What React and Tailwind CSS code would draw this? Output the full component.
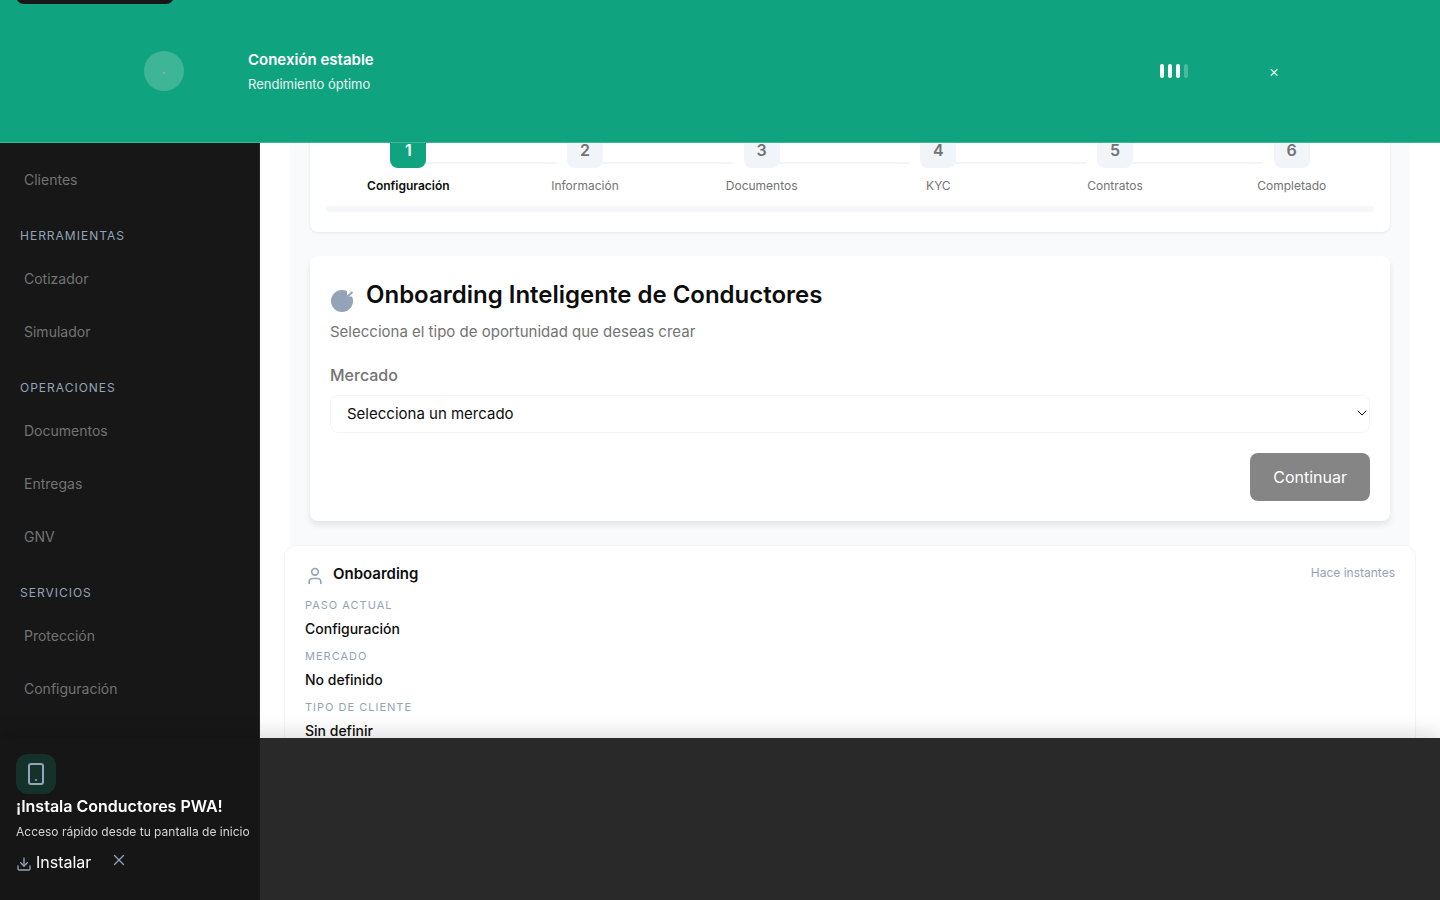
import { Download, Smartphone, User, X, ChevronDown } from "lucide-react";

const groups = [
  { title: "Herramientas", items: ["Cotizador", "Simulador"] },
  { title: "Operaciones", items: ["Documentos", "Entregas", "GNV"] },
  { title: "Servicios", items: ["Protección", "Configuración"] },
];

const steps = ["Configuración", "Información", "Documentos", "KYC", "Contratos", "Completado"];

const summary = [
  ["Paso actual", "Configuración"],
  ["Mercado", "No definido"],
  ["Tipo de cliente", "Sin definir"],
];

function NavItem({ label }) {
  return (
    <a href="#" className="block px-6 py-4 text-sm leading-[21px] text-[#737373]">
      {label}
    </a>
  );
}

function Sidebar() {
  return (
    <aside className="w-[260px] shrink-0 border-r border-[#262626] bg-[#171717] pt-[153px]">
      <nav aria-label="Principal">
        <NavItem label="Clientes" />
        {groups.map((group) => (
          <section key={group.title} className="pt-5">
            <h3 className="px-5 pb-1.5 text-xs leading-5 tracking-[1px] text-[#94a3b8] uppercase">
              {group.title}
            </h3>
            {group.items.map((item) => (
              <NavItem key={item} label={item} />
            ))}
          </section>
        ))}
      </nav>
    </aside>
  );
}

function StatusBanner() {
  return (
    <header className="fixed inset-x-0 top-0 z-20 flex h-[143px] items-center border-b border-white/20 bg-[#10a37f] px-36 text-white">
      <div className="flex size-10 shrink-0 items-center justify-center rounded-full bg-white/20">
        <span className="mt-1 size-0.5 bg-[#94a3b8]" />
      </div>
      <div className="ml-16 flex-1">
        <p className="text-[15px] leading-6 font-semibold">Conexión estable</p>
        <p className="mt-0.5 text-[13px] leading-5 text-white/90">Rendimiento óptimo</p>
      </div>
      <div className="flex gap-1">
        <span className="h-3.5 w-1 rounded-xs bg-white" />
        <span className="h-3.5 w-1 rounded-xs bg-white" />
        <span className="h-3.5 w-1 rounded-xs bg-white" />
        <span className="h-3.5 w-1 rounded-xs bg-white/25" />
      </div>
      <button type="button" aria-label="Cerrar aviso" className="mr-3 ml-[76px] flex size-5 items-center justify-center text-base leading-5 font-light text-white">
        ×
      </button>
    </header>
  );
}

function Stepper() {
  return (
    <section className="rounded-lg bg-white px-2.5 pb-5 shadow-[0_1px_3px_rgba(0,0,0,0.08)]">
      <ol className="flex">
        {steps.map((step, index) => (
          <li key={step} className="relative flex flex-1 flex-col items-center">
            {index < steps.length - 1 && (
              <span className="absolute top-[30px] right-[-60px] left-1/2 h-0.5 bg-[#f1f5f9]" />
            )}
            <span
              className={
                index === 0
                  ? "relative flex size-9 items-center justify-center rounded-lg bg-[#10a37f] font-semibold text-white"
                  : "relative flex size-9 items-center justify-center rounded-lg bg-[#f1f5f9] font-semibold text-[#737373]"
              }
            >
              {index + 1}
            </span>
            <span
              className={
                index === 0
                  ? "mt-2 text-xs leading-5 font-semibold text-[#0d0d0d]"
                  : "mt-2 text-xs leading-5 text-[#737373]"
              }
            >
              {step}
            </span>
          </li>
        ))}
      </ol>
      <div className="mx-1.5 mt-2.5 h-1.5 rounded-full bg-[#f5f7fb]" />
    </section>
  );
}

function TargetIcon() {
  return (
    <svg viewBox="0 0 24 24" className="mt-[13px] size-6 shrink-0" aria-hidden="true">
      <circle cx="12" cy="12" r="11" fill="#94a3b8" />
      <path d="M17 1v5.500l1 1h6V0h-5z" fill="#fff" />
      <path d="m17.500 7.500 5-4.500" stroke="#94a3b8" strokeWidth="2" />
    </svg>
  );
}

function OnboardingForm() {
  return (
    <section className="mt-6 rounded-lg bg-white p-5 shadow-[0_4px_6px_rgba(0,0,0,0.09)]">
      <div className="flex gap-3">
        <TargetIcon />
        <h1 className="text-2xl leading-[38px] font-semibold text-[#0d0d0d]">
          Onboarding Inteligente de Conductores
        </h1>
      </div>
      <p className="mt-1.5 text-[15px] leading-6 text-[#737373]">
        Selecciona el tipo de oportunidad que deseas crear
      </p>
      <label htmlFor="market" className="mt-[19px] block text-base leading-6 font-medium text-[#737373]">
        Mercado
      </label>
      <div className="relative mt-2">
        <select
          id="market"
          className="block h-[38px] w-full appearance-none rounded-lg border border-[#f1f5f9] bg-white px-4 text-[15px] text-[#0d0d0d]"
        >
          <option>Selecciona un mercado</option>
        </select>
        <ChevronDown size={16} strokeWidth={1.5} className="pointer-events-none absolute top-2.5 right-0 text-black" />
      </div>
      <div className="mt-5 flex justify-end">
        <button type="button" disabled className="h-12 rounded-lg bg-[#858585] px-[23px] text-base text-white">
          Continuar
        </button>
      </div>
    </section>
  );
}

function ContextCard() {
  return (
    <section className="mx-6 flex-1 rounded-t-xl border border-b-0 border-[#f1f5f9] bg-white px-5 pt-4 pb-6">
      <div className="flex h-6 items-start justify-between">
        <div className="flex gap-2">
          <User size={20} strokeWidth={2} className="mt-1 text-[#94a3b8]" />
          <h2 className="text-[15px] leading-6 font-semibold text-[#0d0d0d]">Onboarding</h2>
        </div>
        <span className="text-xs leading-[22px] text-[#94a3b8]">Hace instantes</span>
      </div>
      <dl className="mt-2.5 flex flex-col gap-2">
        {summary.map(([term, value]) => (
          <div key={term}>
            <dt className="text-[11px] leading-[18px] tracking-[1px] text-[#94a3b8] uppercase">{term}</dt>
            <dd className="mt-1 text-sm leading-[21px] font-medium text-[#0d0d0d]">{value}</dd>
          </div>
        ))}
      </dl>
    </section>
  );
}

function InstallBar() {
  return (
    <footer className="fixed inset-x-0 bottom-0 z-20 h-[162px] bg-[#171717]/92 px-4 pt-4 text-white shadow-[0_-4px_20px_rgba(0,0,0,0.15)]">
      <div className="flex size-10 items-center justify-center rounded-xl bg-[#10a37f]/20">
        <Smartphone size={24} strokeWidth={2} className="text-[#94a3b8]" />
      </div>
      <p className="text-base leading-6 font-semibold">¡Instala Conductores PWA!</p>
      <p className="mt-1 text-xs leading-5 text-[#d4d4d4]">Acceso rápido desde tu pantalla de inicio</p>
      <div className="mt-2 flex h-6 items-center">
        <button type="button" className="flex items-center gap-1 text-base">
          <Download size={16} strokeWidth={2} className="mt-1 text-[#94a3b8]" />
          Instalar
        </button>
        <button type="button" aria-label="Descartar" className="mb-1 ml-[19px] text-[#94a3b8]">
          <X size={18} strokeWidth={1.75} />
        </button>
      </div>
    </footer>
  );
}

export default function App() {
  return (
    <div className="flex min-h-screen bg-white font-[Inter,sans-serif] text-[#0d0d0d]">
      <a
        href="#content"
        aria-label="Ir al contenido"
        className="fixed -top-9 left-4 z-30 h-10 w-[158px] rounded-lg bg-[#171717]"
      />
      <StatusBanner />
      <Sidebar />
      <main id="content" className="flex min-w-0 flex-1 flex-col">
        <div className="mx-[30px] bg-[#f8fafc] px-5 pt-[132px] pb-6">
          <Stepper />
          <OnboardingForm />
        </div>
        <ContextCard />
      </main>
      <InstallBar />
    </div>
  );
}
